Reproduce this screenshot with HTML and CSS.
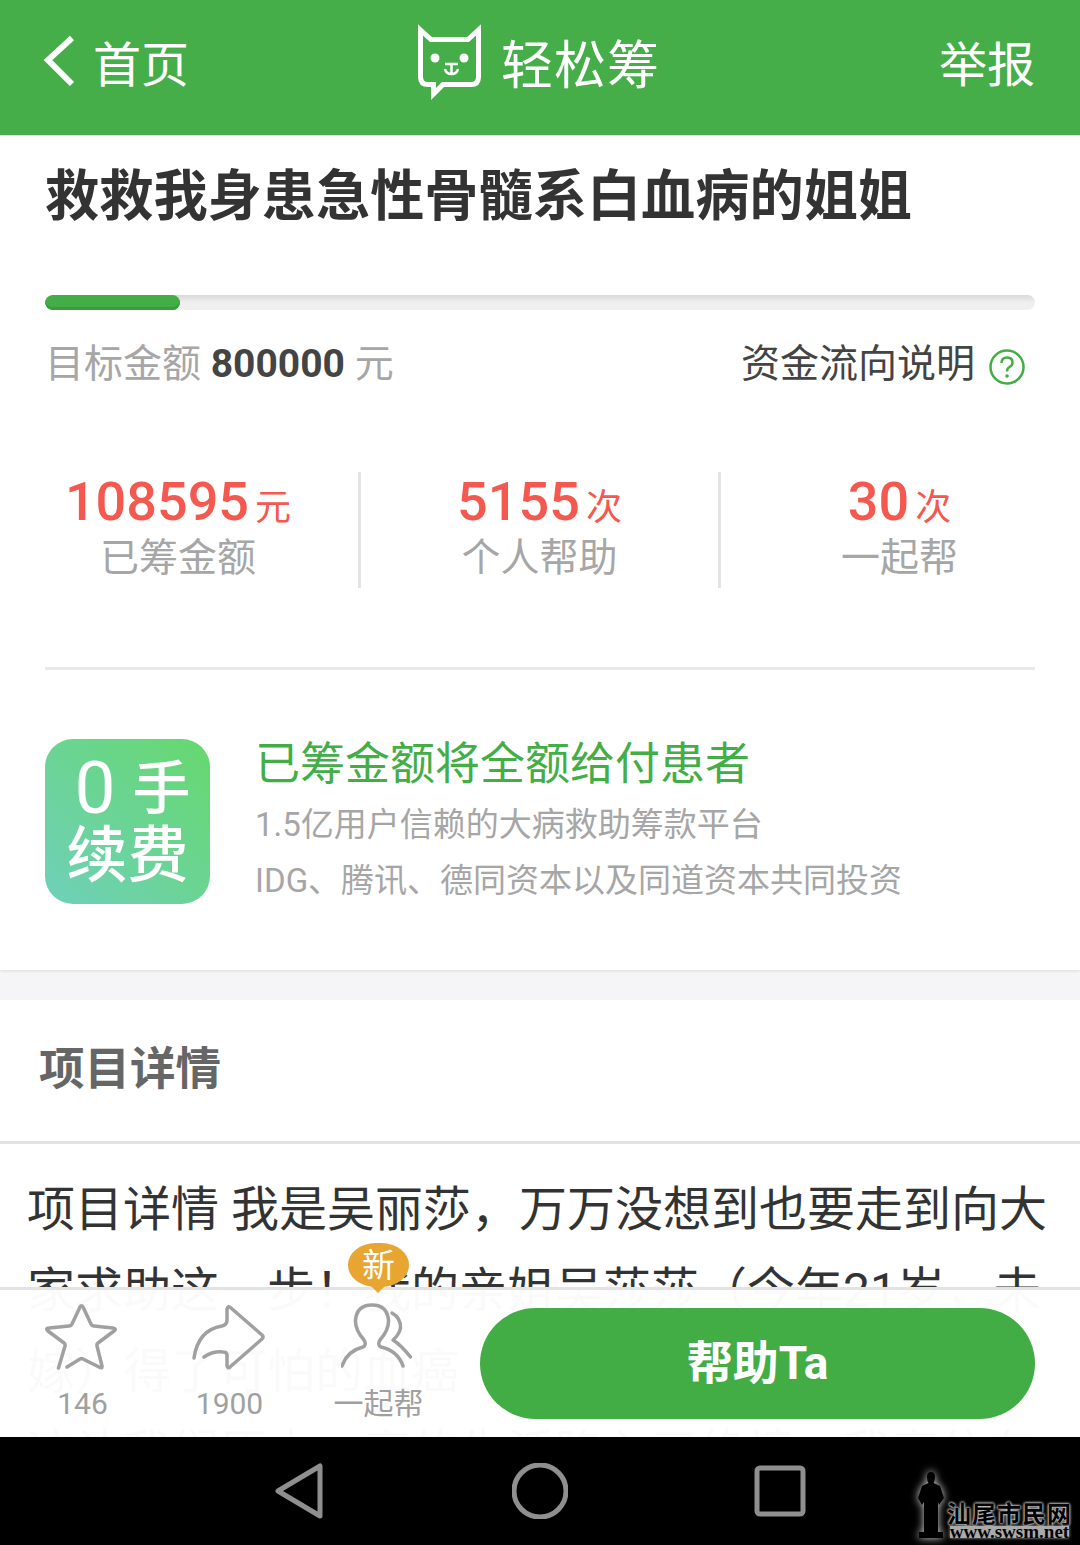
FILE: index.html
```html
<!DOCTYPE html>
<html lang="zh">
<head>
<meta charset="utf-8">
<title>轻松筹</title>
<link rel="stylesheet" href="styles.css">
</head>
<body>
<div class="page">
  <header class="topbar">
    <div class="back">
      <svg class="back-icon" viewBox="0 0 32 52"><path d="M29 3 L5 25 L29 49"/></svg>
      <span>首页</span>
    </div>
    <div class="brand">
      <svg class="cat" viewBox="0 0 68 76">
        <path class="cat-line" d="M4.5 6 L15 15.5 H52 L62.5 6 V53 Q62.5 60.5 55 60.5 H27 L17.5 70 V60.5 H12 Q4.5 60.5 4.5 53 Z"/>
        <circle class="cat-fill" cx="19" cy="34" r="4.5"/>
        <circle class="cat-fill" cx="48" cy="34" r="4.5"/>
        <path class="cat-thin" d="M29 40 H42 M35.5 41 V49 M29 45 Q30 50 35.5 50 Q41 50 42 45"/>
      </svg>
      <span class="brand-name">轻松筹</span>
    </div>
    <div class="report">举报</div>
  </header>

  <main class="content">
    <section class="summary">
      <h1 class="title">救救我身患急性骨髓系白血病的姐姐</h1>
      <div class="progress"><div class="progress-fill" style="width:13.6%"></div></div>
      <div class="goal-row">
        <div class="goal">目标金额 <b>800000</b> 元</div>
        <div class="flow">资金流向说明
          <svg class="help" viewBox="0 0 36 36"><circle cx="18" cy="18" r="16.5"/><path d="M12.5 14 Q12.5 8.5 18 8.5 Q23.5 8.5 23.5 13.5 Q23.5 16.5 20.5 18 Q18 19.2 18 22.5"/><circle class="help-dot" cx="18" cy="27" r="1.8"/></svg>
        </div>
      </div>
      <div class="stats">
        <div class="stat"><div class="stat-num">108595<small>元</small></div><div class="stat-label">已筹金额</div></div>
        <div class="stat"><div class="stat-num">5155<small>次</small></div><div class="stat-label">个人帮助</div></div>
        <div class="stat"><div class="stat-num">30<small>次</small></div><div class="stat-label">一起帮</div></div>
      </div>
      <div class="promo">
        <div class="badge"><span class="badge-top"><i>0</i>手</span><span class="badge-bottom">续费</span></div>
        <div class="promo-text">
          <div class="promo-title">已筹金额将全额给付患者</div>
          <div class="promo-line">1.5亿用户信赖的大病救助筹款平台</div>
          <div class="promo-line">IDG、腾讯、德同资本以及同道资本共同投资</div>
        </div>
      </div>
    </section>

    <section class="details">
      <h2 class="details-head">项目详情</h2>
      <p class="story">项目详情 我是吴丽莎，万万没想到也要走到向大家求助这一步！我的亲姐吴莎莎（今年21岁，未嫁）得了可怕的血癌<br>这让我们原本一家的生活陷入了绝境，我家住在这里</p>
    </section>

    <div class="actionbar">
      <div class="action">
        <svg class="action-icon" viewBox="0 0 76 70"><path d="M13.5 65 L20 43 Q20.5 41 19 40 L3 28 Q0 25 4 25 L24 23 Q26 23 27 21 L35 4 Q36.5 1.5 38 4 L46 21 Q47 23 49 23 L68 25 Q72 26 69 28 L53 40 Q51.5 41 52 43 L57 63 Q57.5 66 54 64 L38 56 Q36.5 55 35 56 L22 64"/></svg>
        <span>146</span>
      </div>
      <div class="action">
        <svg class="action-icon" viewBox="0 0 76 70"><path d="M2 55 Q6 27 30 23 Q35 22 35 17 V6 Q36 2 39 5 L70 32 Q72 34 70 36 L38 64 Q36 66 35 63 V52 Q35 49 31 49 Q21 48 12 54"/></svg>
        <span>1900</span>
      </div>
      <div class="action action-wide">
        <em class="new-tag">新</em>
        <svg class="action-icon" viewBox="0 0 76 70"><path d="M1 63 Q6 48 22 44 Q26 42 23 37 Q14 27 14.5 17 Q16 2 31 2 Q46 2 47.5 17 Q48 27 39 37 Q36 42 40 44 Q57 48 62 63"/><path d="M51 10 Q60 15 59.5 25 Q58 32 52 37 Q60 42 69.5 54"/></svg>
        <span>一起帮</span>
      </div>
      <button class="help-btn">帮助Ta</button>
    </div>
  </main>

  <footer class="navbar">
    <svg class="nav-icon" viewBox="0 0 56 56"><path d="M48 3 V53 L6 28 Z"/></svg>
    <svg class="nav-icon" viewBox="0 0 56 56"><circle cx="28" cy="28" r="26"/></svg>
    <svg class="nav-icon" viewBox="0 0 56 56"><rect x="5" y="5" width="46" height="46" rx="3"/></svg>
    <div class="watermark">
      <svg class="wm-man" viewBox="0 0 28 66"><path d="M14 0 Q18 0 18 5 Q18 9 16.5 11 L23 14 L27 26 L22 33 L21 30 L21 60 H26 V66 H2 V60 H7 L7 30 L5 33 L1 26 L5 14 L11.5 11 Q10 9 10 5 Q10 0 14 0 Z"/></svg>
      <div class="wm-text"><span class="wm-cn">汕尾市民网</span><span class="wm-url">www.swsm.net</span></div>
    </div>
  </footer>
</div>
</body>
</html>
```

FILE: styles.css
```css
* { box-sizing: border-box; }
html, body { margin: 0; padding: 0; }
body {
  font-family: "Roboto", "Noto Sans CJK SC", sans-serif;
  background: #fff;
}
.page {
  width: 1080px;
  height: 1545px;
  display: flex;
  flex-direction: column;
  overflow: hidden;
}

/* top bar */
.topbar {
  height: 135px;
  flex: none;
  background: #45ae48;
  color: #fff;
  display: flex;
  align-items: center;
  justify-content: space-between;
  padding: 0 45px 14px 43px;
  font-size: 48px;
  position: relative;
}
.back { display: flex; align-items: center; gap: 18px; }
.back-icon { width: 32px; height: 52px; }
.back-icon path { fill: none; stroke: #fff; stroke-width: 6; }
.brand { display: flex; align-items: center; gap: 17px; margin: 0 0 0 -52px; padding-top: 2px; }
.cat { width: 68px; height: 76px; }
.cat-line { fill: none; stroke: #fff; stroke-width: 5; }
.cat-thin { fill: none; stroke: #fff; stroke-width: 2.5; }
.cat-fill { fill: #fff; }
.brand-name { font-size: 52px; font-weight: 400; letter-spacing: 1px; line-height: 60px; margin-top: 10px; }

/* content */
.content { flex: 1; position: relative; overflow: hidden; }
.summary {
  padding: 0 45px;
  height: 835px;
  position: relative;
  box-shadow: 0 1px 3px #dcdcdc;
}
.title {
  margin: 0;
  padding-top: 26px;
  height: 160px;
  font-size: 54.2px;
  line-height: 72px;
  font-weight: 700;
  color: #333;
  white-space: nowrap;
}
.progress {
  height: 15px;
  border-radius: 8px;
  background: linear-gradient(#d9d9d9, #efefef 50%, #f0f0f0);
  overflow: hidden;
}
.progress-fill {
  height: 100%;
  border-radius: 8px;
  background: #43ad46;
  box-shadow: inset 0 -3px 0 #3a9c3e;
}
.goal-row {
  display: flex;
  justify-content: space-between;
  align-items: center;
  padding: 16px 10px 0 0;
  height: 84px;
}
.goal { font-size: 39px; color: #a6a6a6; white-space: nowrap; }
.goal b { color: #444; font-weight: 700; }
.flow { display: flex; align-items: center; gap: 14px; font-size: 39px; color: #444; white-space: nowrap; }
.help { width: 36px; height: 36px; margin-top: 14px; }
.help circle { fill: none; stroke: #43ad46; stroke-width: 2.5; }
.help path { fill: none; stroke: #43ad46; stroke-width: 2.5; }
.help .help-dot { fill: #43ad46; stroke: none; }

.stats {
  display: grid;
  grid-template-columns: repeat(3, 1fr);
  margin: 78px -43px 79px -47px;
  height: 116px;
}
.stat {
  text-align: center;
  border-left: 3px solid #e4e4e4;
}
.stat:first-child { border-left: 0; }
.stat-num {
  height: 59px;
  font-size: 54px;
  line-height: 60px;
  font-weight: 500;
  color: #f5584e;
  white-space: nowrap;
}
.stat-num small { font-size: 36px; font-weight: 400; margin-left: 6px; }
.stat-label { font-size: 39px; line-height: 54px; color: #a6a6a6; }

.promo {
  border-top: 3px solid #e8e8e8;
  padding-top: 69px;
  display: flex;
  gap: 45px;
}
.badge {
  width: 165px;
  height: 165px;
  flex: none;
  border-radius: 28px;
  background: linear-gradient(45deg, #6fd0ba, #66d86e);
  color: #fff;
  display: flex;
  flex-direction: column;
  align-items: center;
  padding-top: 16px;
}
.badge-top { font-size: 58px; font-weight: 500; line-height: 66px; height: 68px; white-space: nowrap; margin-left: 10px; }
.badge-top i { font-style: normal; font-weight: 400; font-size: 73px; line-height: 66px; margin-right: 17px; vertical-align: -4px; }
.badge-bottom { font-size: 61px; font-weight: 500; line-height: 66px; white-space: nowrap; }
.promo-text { margin-top: -4px; }
.promo-title { font-size: 45px; line-height: 60px; height: 62px; color: #43ad46; white-space: nowrap; }
.promo-line { font-size: 33px; line-height: 56px; color: #a6a6a6; white-space: nowrap; }

/* details */
.details { border-top: 30px solid #f5f5f7; }
.details-head {
  margin: 0;
  height: 144px;
  padding: 35px 39px 0;
  font-size: 45.5px;
  line-height: 70px;
  font-weight: 700;
  color: #666;
  border-bottom: 3px solid #e3e3e3;
}
.story {
  margin: 0;
  padding: 25px 27px 0;
  font-size: 48px;
  line-height: 81px;
  color: #333;
}

/* action bar */
.actionbar {
  position: absolute;
  left: 0;
  right: 0;
  bottom: 0;
  height: 150px;
  background: rgba(255, 255, 255, 0.975);
  border-top: 3px solid #e3e3e3;
  display: flex;
  align-items: flex-start;
  padding: 13px 45px 0 9px;
}
.action {
  width: 147px;
  display: flex;
  flex-direction: column;
  align-items: center;
  font-size: 30px;
  line-height: 36px;
  color: #a0a0a0;
  position: relative;
}
.action-wide { width: 151px; margin-right: 26px; }
.action-icon { width: 76px; height: 70px; margin-bottom: 13px; }
.action-icon path { fill: none; stroke: #a0a0a0; stroke-width: 3.5; stroke-linecap: round; stroke-linejoin: round; }
.new-tag {
  position: absolute;
  top: -60px;
  left: 45px;
  width: 61px;
  height: 44px;
  border-radius: 30px / 24px;
  background: #e8a532;
  color: #fff;
  font-style: normal;
  font-size: 33px;
  line-height: 46px;
  text-align: center;
}
.new-tag::after {
  content: "";
  position: absolute;
  left: 22px;
  top: 42px;
  border: 8px solid transparent;
  border-top-color: #e8a532;
  border-bottom: 0;
}
.help-btn {
  width: 555px;
  height: 111px;
  margin-top: 5px;
  padding: 0 0 10px;
  border: 0;
  border-radius: 56px;
  background: #42ad45;
  color: #fff;
  font-family: inherit;
  font-size: 46px;
  font-weight: 700;
}

/* nav bar */
.navbar {
  height: 108px;
  flex: none;
  background: #000;
  display: flex;
  align-items: center;
  justify-content: center;
  gap: 184px;
  position: relative;
}
.nav-icon { width: 56px; height: 56px; }
.nav-icon path, .nav-icon circle, .nav-icon rect { fill: none; stroke: #8f8f8f; stroke-width: 5; stroke-linejoin: round; }
.watermark {
  position: absolute;
  right: 8px;
  bottom: 7px;
  display: flex;
  align-items: flex-end;
  gap: 2px;
}
.wm-man {
  width: 28px;
  height: 66px;
  fill: #000;
  filter: drop-shadow(0 0 4px #ddd);
}
.wm-text { display: flex; flex-direction: column; align-items: center; }
.wm-cn { font-family: "Noto Sans CJK SC", sans-serif; font-size: 24px; line-height: 26px; font-weight: 700; color: #000; text-shadow: 0 0 3px #ccc, 0 0 3px #ccc, 0 0 2px #ccc; letter-spacing: 1px; white-space: nowrap; }
.wm-url { font-family: "Liberation Serif", serif; font-size: 19px; line-height: 12px; font-weight: 700; color: #000; background: #aaa; box-shadow: 0 0 3px #aaa; white-space: nowrap; }
```
